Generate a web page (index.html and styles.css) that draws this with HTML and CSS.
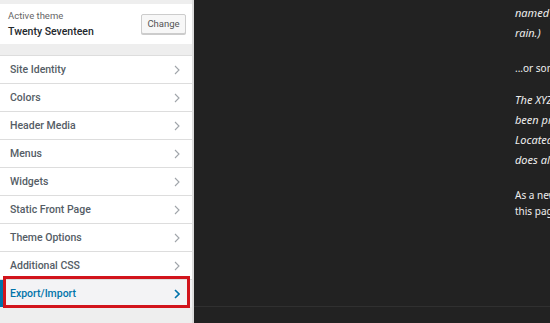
FILE: index.html
```html
<!DOCTYPE html>
<html lang="en">
<head>
<meta charset="UTF-8" />
<meta name="viewport" content="width=device-width, initial-scale=1.0"/>
<title>Customize: Twenty Seventeen</title>
<link rel="stylesheet" href="styles.css">
</head>
<body>
<div id="customizer">
  <div id="sidebar">
    <div class="theme-info">
      <div>
        <div class="theme-label">Active theme</div>
        <div class="theme-name">Twenty Seventeen</div>
      </div>
      <button class="change-btn">Change</button>
    </div>
    <ul class="sections">
      <li class="section">Site Identity<svg class="chev" viewBox="0 0 6 10"><polyline points="1,1 5,5 1,9"/></svg></li>
      <li class="section">Colors<svg class="chev" viewBox="0 0 6 10"><polyline points="1,1 5,5 1,9"/></svg></li>
      <li class="section">Header Media<svg class="chev" viewBox="0 0 6 10"><polyline points="1,1 5,5 1,9"/></svg></li>
      <li class="section">Menus<svg class="chev" viewBox="0 0 6 10"><polyline points="1,1 5,5 1,9"/></svg></li>
      <li class="section">Widgets<svg class="chev" viewBox="0 0 6 10"><polyline points="1,1 5,5 1,9"/></svg></li>
      <li class="section">Static Front Page<svg class="chev" viewBox="0 0 6 10"><polyline points="1,1 5,5 1,9"/></svg></li>
      <li class="section">Theme Options<svg class="chev" viewBox="0 0 6 10"><polyline points="1,1 5,5 1,9"/></svg></li>
      <li class="section">Additional CSS<svg class="chev" viewBox="0 0 6 10"><polyline points="1,1 5,5 1,9"/></svg></li>
      <li class="section active">Export/Import<svg class="chev" viewBox="0 0 6 10"><polyline points="1,1 5,5 1,9"/></svg>
        <span class="highlight"></span>
      </li>
    </ul>
  </div>
  <div id="preview">
    <div class="page-text">
      <p class="quote">named Jack, and I like piña coladas. (And gettin' caught in the<br>rain.)</p>
      <p class="plain">...or something like this:</p>
      <p class="quote">The XYZ Doohickey Company was founded in 1971, and has<br>been providing quality doohickeys to the public ever since.<br>Located in Gotham City, XYZ employs over 2,000 people and<br>does all kinds of awesome things for the Gotham community.</p>
      <p class="plain">As a new WordPress user, you should go to your dashboard to delete<br>this page and create new pages for your content. Have fun!</p>
    </div>
    <div class="footer-line"></div>
  </div>
</div>
</body>
</html>
```

FILE: styles.css
```css
body {
    margin: 0;
    font-family: Roboto, "Liberation Sans", Arial, sans-serif;
    overflow: hidden;
}
#customizer {
    display: flex;
    width: 550px;
    height: 323px;
}
#sidebar {
    width: 192px;
    flex-shrink: 0;
    background-color: #eeeeee;
    border-right: 2px solid #dcdcdc;
    padding-top: 4px;
}
.theme-info {
    background-color: #ffffff;
    height: 40px;
    display: flex;
    align-items: center;
    justify-content: space-between;
    padding: 0 6px 0 8px;
}
.theme-label {
    font-size: 9.5px;
    color: #666;
    margin-bottom: 4px;
}
.theme-name {
    font-size: 10.5px;
    font-weight: 500;
    color: #23282d;
}
.change-btn {
    font-family: inherit;
    font-size: 9.5px;
    color: #555;
    background-color: #f7f7f7;
    border: 1px solid #cccccc;
    border-radius: 2px;
    width: 45px;
    height: 20px;
    padding: 0;
    box-shadow: 0 1px 0 #ccc;
    margin-top: -1px;
}
.sections {
    list-style: none;
    margin: 11px 0 0;
    padding: 0;
}
.section {
    position: relative;
    height: 27px;
    border-top: 1px solid #dddddd;
    background-color: #ffffff;
    display: flex;
    align-items: center;
    justify-content: space-between;
    padding: 0 12px 0 10px;
    font-size: 10.5px;
    font-weight: 500;
    color: #555d66;
}
.chev {
    width: 6px;
    height: 10px;
    fill: none;
    stroke: #a0a5aa;
    stroke-width: 1.1;
}
.section.active {
    background-color: #f3f3f5;
    color: #0073aa;
    box-shadow: inset 3px 0 0 #0073aa;
}
.section.active .chev {
    stroke: #0073aa;
    stroke-width: 1.6;
}
.highlight {
    position: absolute;
    left: 3px;
    right: 2px;
    top: -4px;
    bottom: -1px;
    border: 3px solid #d2141c;
}
#preview {
    flex: 1;
    position: relative;
    background-color: #222222;
    overflow: hidden;
    font-family: "Noto Sans", "Liberation Sans", sans-serif;
    color: #eeeeee;
}
.page-text {
    margin-left: 321px;
    padding-top: 3px;
    white-space: nowrap;
}
.page-text p {
    margin: 0;
}
.quote {
    font-style: italic;
    font-size: 11px;
    line-height: 20px;
}
.page-text .plain {
    font-size: 10px;
    line-height: 16px;
    margin: 17px 0 14px;
}
.footer-line {
    position: absolute;
    left: 0;
    right: 0;
    top: 306px;
    border-top: 1px solid #303030;
}
```
